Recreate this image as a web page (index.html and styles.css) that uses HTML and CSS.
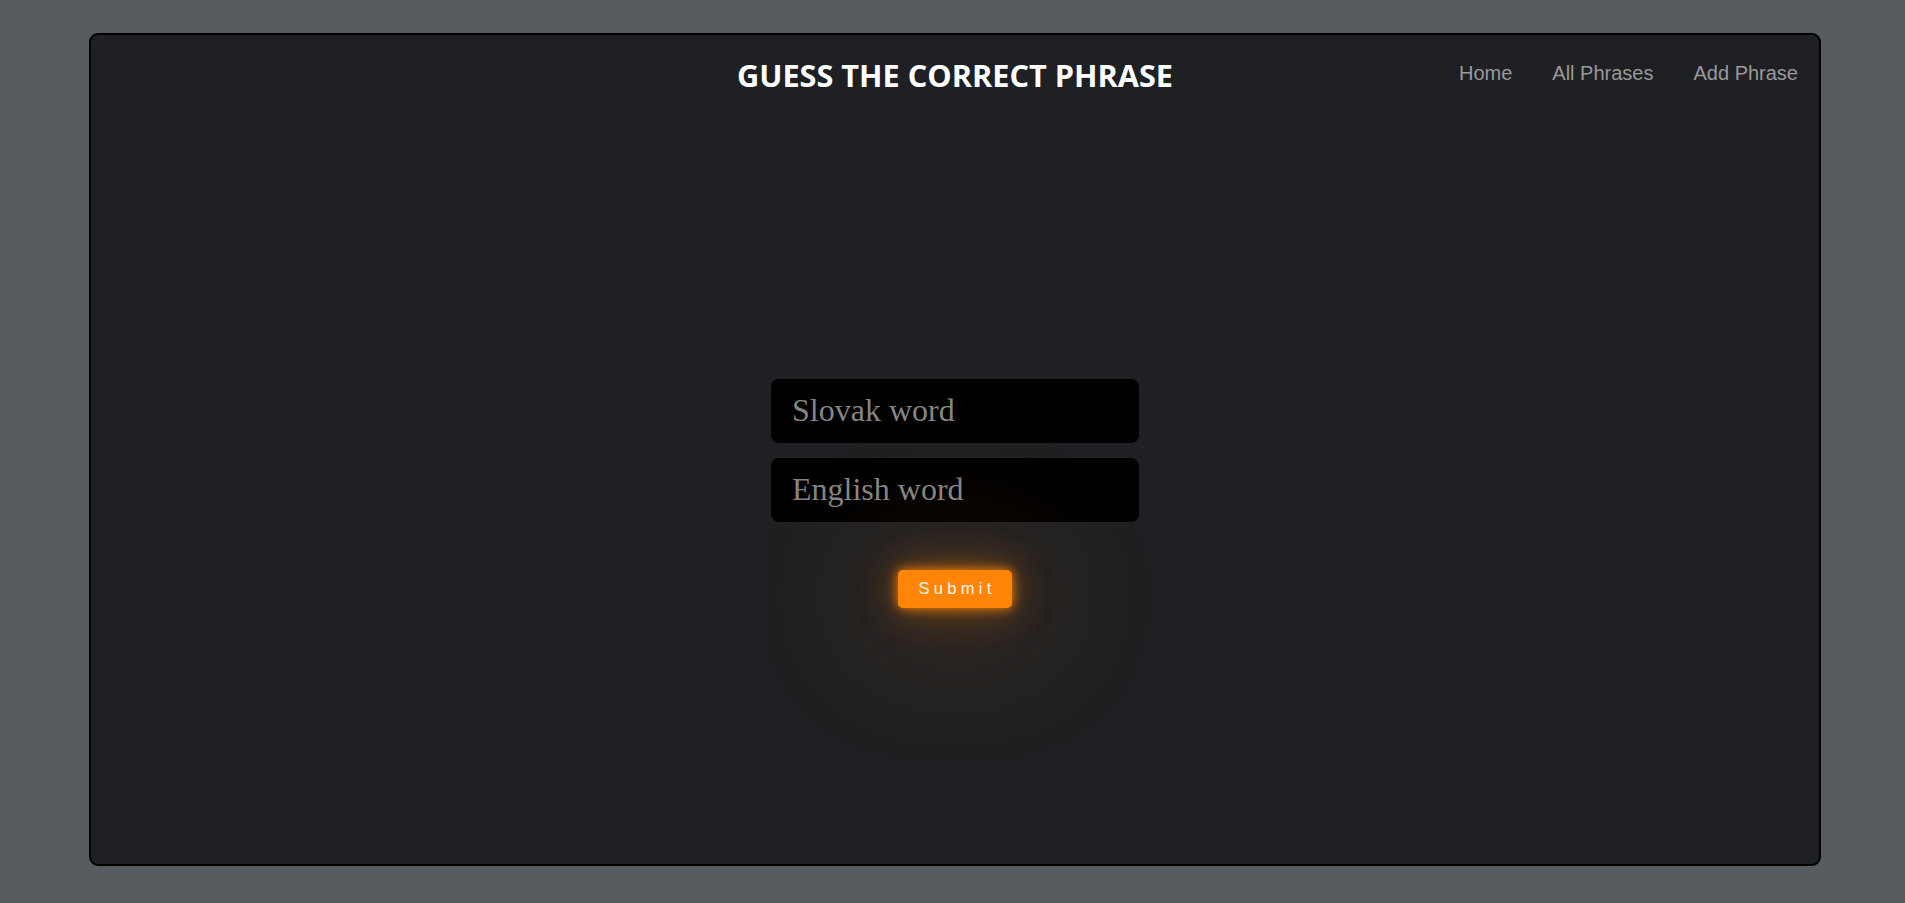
FILE: index.html
```html
<!DOCTYPE html>
<html lang="en">
<head>
<meta charset="utf-8">
<title>Guess the correct phrase</title>
<link rel="stylesheet" href="styles.css">
</head>
<body>
<div class="card">
  <header class="header">
    <div class="spacer"></div>
    <h1 class="title">GUESS THE CORRECT PHRASE</h1>
    <nav class="nav">
      <a href="#" class="nav-link">Home</a>
      <a href="#" class="nav-link">All Phrases</a>
      <a href="#" class="nav-link">Add Phrase</a>
    </nav>
  </header>
  <main class="main">
    <form class="form">
      <input class="field" type="text" placeholder="Slovak word">
      <input class="field" type="text" placeholder="English word">
      <button class="submit" type="button">Submit</button>
    </form>
  </main>
</div>
</body>
</html>
```

FILE: styles.css
```css
html, body {
  margin: 0;
  padding: 0;
  height: 100%;
}
body {
  background: #565b5f;
  padding: 33px 84px 37px 89px;
  box-sizing: border-box;
  font-family: "Liberation Sans", Arial, sans-serif;
}
.card {
  height: 833px;
  box-sizing: border-box;
  background: #1f2023;
  border: 2px solid #000;
  border-radius: 9px;
  display: flex;
  flex-direction: column;
}
.header {
  display: grid;
  grid-template-columns: 1fr auto 1fr;
  align-items: center;
  height: 85px;
  padding: 0 0 6px 0;
  box-sizing: border-box;
}
.title {
  margin: 0;
  color: #ffffff;
  font-family: "Open Sans", sans-serif;
  font-weight: 700;
  font-size: 30.7px;
  letter-spacing: 0;
}
.nav {
  display: flex;
  justify-content: flex-end;
  gap: 40px;
  padding: 0 21px 2px 0;
}
.nav-link {
  color: #9a9a9a;
  text-decoration: none;
  font-size: 20px;
}
.main {
  flex: 1;
  display: flex;
  align-items: center;
  justify-content: center;
  padding-top: 2px;
}
.form {
  display: flex;
  flex-direction: column;
  align-items: center;
  gap: 15px;
}
.field {
  width: 368px;
  height: 64px;
  box-sizing: border-box;
  background: #000;
  border: none;
  border-radius: 8px;
  padding: 0 21px;
  font-family: "Liberation Serif", Georgia, serif;
  font-size: 32px;
  color: #8a8a8a;
  outline: none;
}
.field::placeholder {
  color: #858585;
}
.submit {
  margin-top: 33px;
  width: 114px;
  height: 38px;
  background: #ff8508;
  border: none;
  border-radius: 5px;
  color: #fff8ee;
  font-family: "Liberation Sans", Arial, sans-serif;
  font-size: 16.5px;
  letter-spacing: 4.3px;
  padding: 0 0 0 4px;
  box-shadow: 0 0 12px #ff8508, 0 0 40px rgba(255, 133, 8, 0.45), 0 8px 130px 35px rgba(255, 120, 0, 0.13);
}
```
